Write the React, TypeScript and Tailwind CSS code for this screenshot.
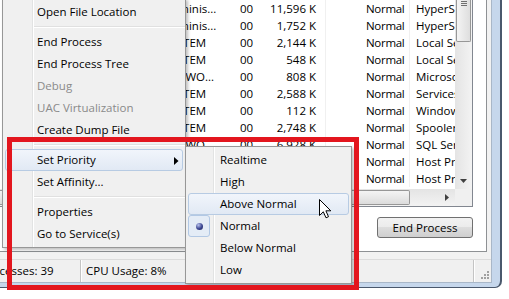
import React from "react";

type Row = [string, string, string, string];

const rows: Row[] = [
  ["Adminis...", "00", "11,596 K", "HyperSnap"],
  ["Adminis...", "00", "1,752 K", "HyperSnap"],
  ["SYSTEM", "00", "2,144 K", "Local Security"],
  ["SYSTEM", "00", "548 K", "Local Session"],
  ["NETWO...", "00", "808 K", "Microsoft"],
  ["SYSTEM", "00", "2,588 K", "Services and"],
  ["SYSTEM", "00", "112 K", "Windows Session"],
  ["SYSTEM", "00", "2,748 K", "Spooler SubSystem"],
  ["NETWO...", "00", "6,928 K", "SQL Server"],
  ["", "", "", "Host Process"],
  ["", "", "", "Host Process"],
];

type MenuItem = {
  label?: string;
  sep?: boolean;
  disabled?: boolean;
  hl?: boolean;
  arrow?: boolean;
  radio?: boolean;
};

const mainMenu: MenuItem[] = [
  { label: "Open File Location" },
  { sep: true },
  { label: "End Process" },
  { label: "End Process Tree" },
  { label: "Debug", disabled: true },
  { label: "UAC Virtualization", disabled: true },
  { label: "Create Dump File" },
  { sep: true },
  { label: "Set Priority", hl: true, arrow: true },
  { label: "Set Affinity..." },
  { sep: true },
  { label: "Properties" },
  { label: "Go to Service(s)" },
];

const priorityMenu: MenuItem[] = [
  { label: "Realtime" },
  { label: "High" },
  { label: "Above Normal", hl: true },
  { label: "Normal", radio: true },
  { label: "Below Normal" },
  { label: "Low" },
];

function MenuRows({ items, gutter }: { items: MenuItem[]; gutter: number }) {
  return (
    <>
      {items.map((it, i) =>
        it.sep ? (
          <div key={i} className="h-[8px] flex items-center" style={{ marginLeft: gutter }}>
            <div className="h-[2px] w-full border-t border-[#e0e0e0] border-b border-b-white" />
          </div>
        ) : (
          <div
            key={i}
            className={
              "relative h-[22px] mx-[2px] rounded-[3px] border flex items-center pl-[31px] " +
              (it.hl
                ? "border-[#b7cbe3] bg-[linear-gradient(to_bottom,#f1f5fb,#e1e9f4)]"
                : "border-transparent") +
              (it.disabled ? " text-[#8a8a8a]" : " text-black")
            }
          >
            {it.radio && (
              <div className="absolute left-[-1px] top-[-1px] w-[22px] h-[22px] rounded-[3px] border border-[#b2c8e4] bg-[#e4ecf6] flex items-center justify-center">
                <div className="w-[7px] h-[7px] rounded-full bg-[radial-gradient(circle_at_35%_30%,#b9c3ee,#3b4590_55%,#1e245a)]" />
              </div>
            )}
            {it.label}
            {it.arrow && (
              <svg className="absolute right-[3px] top-[7px]" width="5" height="8" viewBox="0 0 5 8">
                <path d="M0 0 L4.5 4 L0 8 Z" fill="#000" />
              </svg>
            )}
          </div>
        )
      )}
    </>
  );
}

export default function App() {
  return (
    <div className="relative w-[509px] h-[299px] overflow-hidden bg-white font-['Open_Sans',sans-serif] text-[11.5px] leading-none select-none">
      {/* Task Manager window behind */}
      <div className="ml-[-30px] w-[532px] h-[288px] flex flex-col bg-[#c6d7ec] border-r-2 border-b border-[#4a586c] rounded-br-[7px] pr-[8px] pb-[4px]">
        <div className="flex-1 flex flex-col border-r border-b border-[#a9b7c8] bg-[#f2f2f2]">
          <div className="h-[259px] pr-[4px]">
            <div className="h-[252px] bg-white border-r border-b border-[#8e9194] pr-[13px] flex flex-col">
              {/* list view */}
              <div className="w-[503px] border-r border-b border-[#828790] flex flex-col">
                <div className="h-[189px] flex">
                  <div className="w-[485px] overflow-hidden">
                    {rows.map((r, i) => (
                      <div key={i} className="h-[17px] flex items-center whitespace-nowrap text-black">
                        <div className="w-[188px] shrink-0" />
                        <div className="w-[74px] shrink-0 pl-[6px]">{r[0]}</div>
                        <div className="w-[30px] shrink-0 pl-[8px]">{r[1]}</div>
                        <div className="w-[64px] shrink-0 text-right pr-[9px] h-full flex items-center justify-end border-r border-[#f0f0f0]">
                          {r[2]}
                        </div>
                        <div className="w-[84px] shrink-0 pl-[40px] h-full flex items-center border-r border-[#f0f0f0] tracking-[-0.3px]">
                          Normal
                        </div>
                        <div className="pl-[6px]">{r[3]}</div>
                      </div>
                    ))}
                  </div>
                  {/* vertical scrollbar */}
                  <div className="w-[17px] h-full flex flex-col bg-[linear-gradient(to_right,#e4e4e4,#f3f3f3)]">
                    <div className="h-[42px] mx-[1px] rounded-b-[2px] border border-t-0 border-[#979797] bg-[linear-gradient(to_right,#f4f4f4,#dedede)] flex flex-col items-center gap-[1px] pt-[1px]">
                      <div className="w-[6px] h-[1px] bg-[#6f6f6f]" />
                      <div className="w-[6px] h-[1px] bg-[#6f6f6f]" />
                      <div className="w-[6px] h-[1px] bg-[#6f6f6f]" />
                    </div>
                    <div className="flex-1" />
                    <div className="h-[17px] flex items-center justify-center">
                      <svg width="7" height="4" viewBox="0 0 7 4">
                        <path d="M0 0 L7 0 L3.5 4 Z" fill="#404040" />
                      </svg>
                    </div>
                  </div>
                </div>
                <div className="h-[17px] flex">
                  <div className="w-[485px] flex bg-[linear-gradient(to_bottom,#e4e4e4,#f3f3f3)]">
                    <div className="w-[440px] my-[1px] rounded-r-[2px] border border-l-0 border-[#979797] bg-[linear-gradient(to_bottom,#f4f4f4,#dcdcdc)]" />
                    <div className="flex-1" />
                    <div className="w-[17px] flex items-center justify-center">
                      <svg width="4" height="7" viewBox="0 0 4 7">
                        <path d="M0 0 L4 3.5 L0 7 Z" fill="#404040" />
                      </svg>
                    </div>
                  </div>
                  <div className="w-[17px] bg-[#f0f0f0]" />
                </div>
              </div>
              <div className="flex justify-end mt-[10px]">
                <div className="w-[96px] h-[21px] rounded-[3px] border border-[#707070] bg-[linear-gradient(to_bottom,#f2f2f2,#ebebeb_50%,#dddddd_50%,#cfcfcf)] flex items-center justify-center text-black">
                  End Process
                </div>
              </div>
            </div>
          </div>
          {/* status bar */}
          <div className="flex-1 flex items-stretch text-black bg-[#f0f0f0] border-t border-[#dcdcdc]">
            <div className="w-[110px] flex items-center pl-[11px]">Processes: 39</div>
            <div className="w-[1px] bg-[#c4c4c4]" />
            <div className="w-[104px] flex items-center pl-[4px] border-l border-white">CPU Usage: 8%</div>
            <div className="w-[1px] bg-[#c4c4c4]" />
            <div className="w-[287px] border-l border-white" />
            <div className="w-[1px] bg-[#c4c4c4]" />
            <div className="flex-1 border-l border-white relative">
              <div className="absolute right-[2px] bottom-[3px] grid grid-cols-3 gap-[1px]">
                <div />
                <div />
                <div className="w-[2px] h-[2px] bg-[#a0a0a0]" />
                <div />
                <div className="w-[2px] h-[2px] bg-[#a0a0a0]" />
                <div className="w-[2px] h-[2px] bg-[#a0a0a0]" />
                <div className="w-[2px] h-[2px] bg-[#a0a0a0]" />
                <div className="w-[2px] h-[2px] bg-[#a0a0a0]" />
                <div className="w-[2px] h-[2px] bg-[#a0a0a0]" />
              </div>
            </div>
          </div>
        </div>
      </div>

      {/* context menu */}
      <div className="absolute left-[2px] top-[-2px] w-[184px] bg-[#f0f0f0] border border-[#979797] pt-[2px] pb-[2px] shadow-[2px_2px_3px_rgba(0,0,0,0.25)]">
        <div className="absolute top-0 bottom-0 left-[29px] w-[2px] border-l border-[#e2e3e3] border-r border-r-white" />
        <MenuRows items={mainMenu} gutter={29} />
      </div>

      {/* priority submenu */}
      <div className="absolute left-[185px] top-[146px] w-[167px] bg-[#f0f0f0] border border-[#979797] pt-[2px] pb-[2px] shadow-[2px_2px_3px_rgba(0,0,0,0.25)]">
        <div className="absolute top-0 bottom-0 left-[27px] w-[2px] border-l border-[#e2e3e3] border-r border-r-white" />
        <MenuRows items={priorityMenu} gutter={27} />
      </div>

      {/* red highlight frame */}
      <div className="absolute left-[7px] top-[137px] w-[352px] h-[153px] border-[5px] border-[#e3161e]" />

      {/* mouse cursor */}
      <svg className="absolute left-[319px] top-[199px]" width="13" height="20" viewBox="0 0 13 20">
        <path
          d="M0.5 0.5 L0.5 16.5 L4.3 12.8 L7 18.8 L9.5 17.7 L6.9 11.8 L11.8 11.8 Z"
          fill="#fff"
          stroke="#000"
          strokeWidth="1"
          strokeLinejoin="round"
        />
      </svg>
    </div>
  );
}
